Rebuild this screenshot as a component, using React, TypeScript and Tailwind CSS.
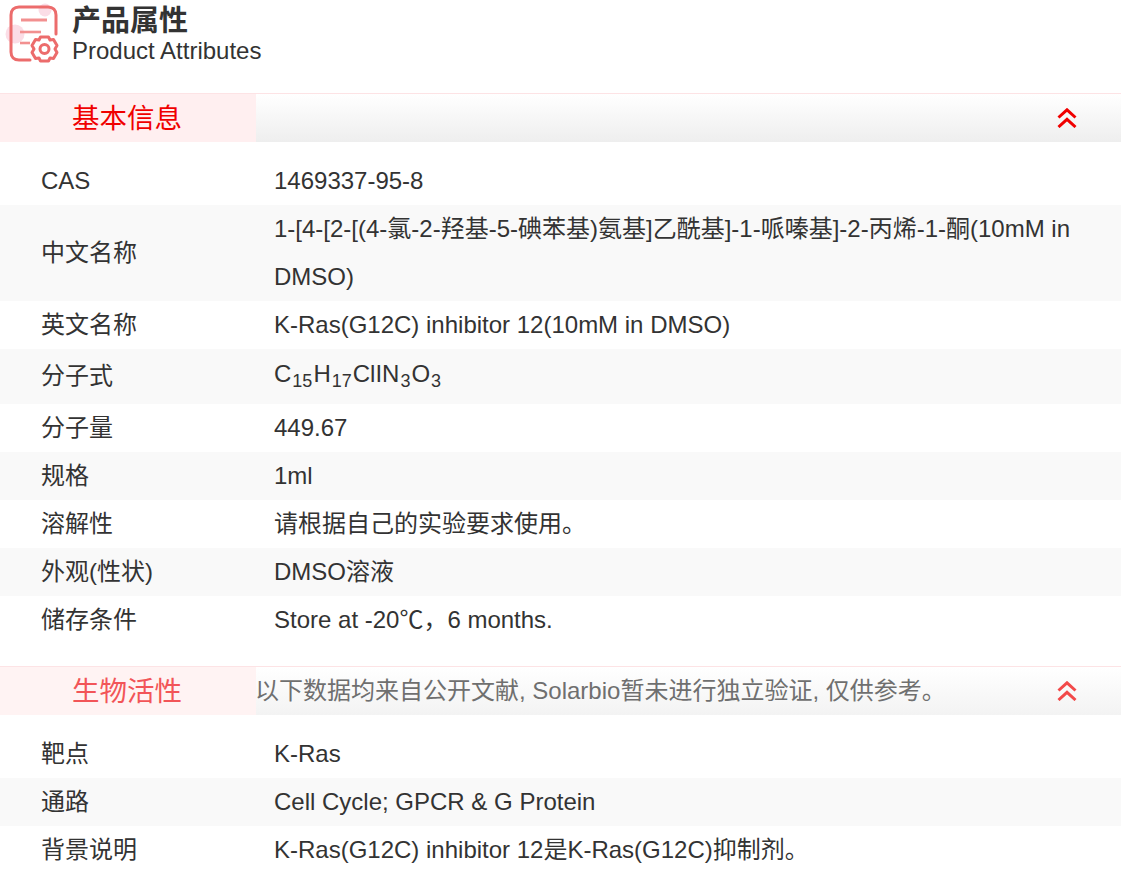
import type { ReactNode } from "react";

const FONT = "font-['Liberation_Sans','Noto_Sans_CJK_SC',sans-serif]";

function Chevrons() {
  return (
    <svg width="20" height="20" viewBox="0 0 20 20" fill="none" stroke="#f00000" strokeWidth="3">
      <path d="M1.500 9.500 10 1.800l8.500 7.700" />
      <path d="M1.500 19 10 11.300l8.500 7.700" />
    </svg>
  );
}

// drawn in page coordinates, the header starts at the page corner
function AttrIcon() {
  return (
    <svg width="72" height="68" viewBox="0 0 72 68" fill="none" className="shrink-0 blur-[0.5px]">
      <circle cx="45" cy="10" r="6.500" fill="#fbdde6" />
      <circle cx="15" cy="34" r="9.500" fill="#fbdde6" />
      <path
        d="M30 60H19c-5 0-8-3-8-8V15c0-5 3-8 8-8h29c5 0 8 3 8 8v19"
        stroke="#ec6c6c"
        strokeWidth="3"
        strokeLinecap="round"
      />
      <path d="M21 20h26" stroke="#f29090" strokeWidth="3" />
      <path d="M20 32h21" stroke="#f29090" strokeWidth="2.600" />
      <path d="M20 43h10" stroke="#f29090" strokeWidth="2.600" />
      <path
        d="M40.500 37h8l1.500 3 3.500-.5 3.500 6-2 3.500 2 3.500-3.500 6-3.500-.5-1.500 3h-8l-1.500-3-3.500.5-3.500-6 2-3.500-2-3.500 3.500-6 3.500.5z"
        stroke="#ec6c6c"
        strokeWidth="3"
        strokeLinejoin="round"
        fill="#fff"
      />
      <circle cx="44.500" cy="49" r="4.500" stroke="#ec6c6c" strokeWidth="3" />
    </svg>
  );
}

function SectionHeader({ title, note, muted }: { title: string; note?: string; muted?: boolean }) {
  return (
    <div className="flex h-[49px] border-t border-[#fde3e5]">
      <div className={`flex w-[256px] shrink-0 items-center pt-[2px] pl-[72px] text-[27.500px] ${muted ? "bg-[#fff3f3] text-[#f25558]" : "bg-[#ffeff0] text-[#f00000]"}`}>
        {title}
      </div>
      <div className={`flex flex-1 items-center justify-between bg-gradient-to-b from-[#ffffff] pr-[44px] ${muted ? "to-[#f3f3f3]" : "to-[#eeeeee]"}`}>
        <span className="-ml-px text-[24px] text-[#6f6f6f]">{note}</span>
        <span className={muted ? "opacity-70" : ""}><Chevrons /></span>
      </div>
    </div>
  );
}

function Row({ label, shaded, tall, children }: { label: string; shaded?: boolean; tall?: boolean; children: ReactNode }) {
  return (
    <div className={`flex items-center text-[24px] leading-[48px] text-[#333333] ${shaded ? "bg-[#f9f9f9]" : ""} ${tall ? "h-[55px]" : ""}`}>
      <div className={`w-[274px] shrink-0 pl-[41px] ${tall ? "pb-px" : ""}`}>{label}</div>
      <div className={`flex-1 pr-[40px] ${tall ? "pb-[6px]" : ""}`}>{children}</div>
    </div>
  );
}

function Sub({ children }: { children: ReactNode }) {
  return <sub className="bottom-[-5.500px] px-px">{children}</sub>;
}

export default function App() {
  return (
    <div className={`w-[1121px] bg-white ${FONT}`}>
      <div className="flex h-[93px] items-start">
        <AttrIcon />
        <div className="pt-[3px] text-[#333333]">
          <div className="text-[29px] leading-[36px] font-bold">产品属性</div>
          <div className="text-[24px] leading-[24px]">Product Attributes</div>
        </div>
      </div>

      <SectionHeader title="基本信息" />
      <div className="pt-[15px] pb-[22px]">
        <Row label="CAS">1469337-95-8</Row>
        <Row label="中文名称" shaded>1-[4-[2-[(4-氯-2-羟基-5-碘苯基)氨基]乙酰基]-1-哌嗪基]-2-丙烯-1-酮(10mM in DMSO)</Row>
        <Row label="英文名称">K-Ras(G12C) inhibitor 12(10mM in DMSO)</Row>
        <Row label="分子式" shaded tall>
          C<Sub>15</Sub>H<Sub>17</Sub>ClIN<Sub>3</Sub>O<Sub>3</Sub>
        </Row>
        <Row label="分子量">449.67</Row>
        <Row label="规格" shaded>1ml</Row>
        <Row label="溶解性">请根据自己的实验要求使用。</Row>
        <Row label="外观(性状)" shaded>DMSO溶液</Row>
        <Row label="储存条件">Store at -20℃，6 months.</Row>
      </div>

      <SectionHeader title="生物活性" muted note="以下数据均来自公开文献, Solarbio暂未进行独立验证, 仅供参考。" />
      <div className="pt-[15px]">
        <Row label="靶点">K-Ras</Row>
        <Row label="通路" shaded>Cell Cycle; GPCR &amp; G Protein</Row>
        <Row label="背景说明">K-Ras(G12C) inhibitor 12是K-Ras(G12C)抑制剂。</Row>
      </div>
    </div>
  );
}
